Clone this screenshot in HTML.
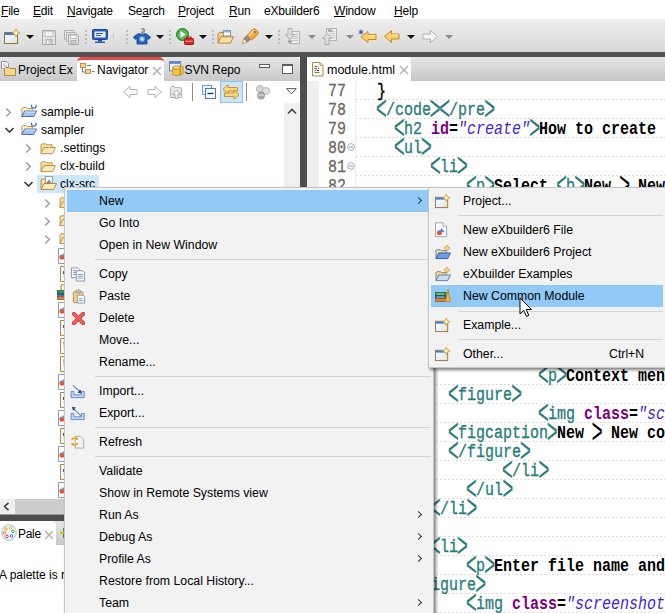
<!DOCTYPE html>
<html>
<head>
<meta charset="utf-8">
<title>eXbuilder6</title>
<style>
*{box-sizing:border-box;margin:0;padding:0}
html,body{width:665px;height:613px;overflow:hidden;background:#fff}
body{position:relative;font-family:"Liberation Sans","NanumGothic",sans-serif;font-size:12px;color:#000}
.abs{position:absolute}
#menubar{left:0;top:0;width:665px;height:19px;background:#fff}
#menubar span{position:absolute;top:4px;font-size:12px;line-height:14px;white-space:nowrap;letter-spacing:-0.200px}
#menubar u{text-decoration:underline;text-underline-offset:1px}
#toolbar{left:0;top:19px;width:665px;height:33px;background:linear-gradient(#eeeeee,#d9d9d9)}
#band{left:0;top:52px;width:665px;height:5px;background:#515151}
#gap{left:300px;top:57px;width:7px;height:556px;background:#4d4d4d}
/* left panel */
#lhead{left:0;top:57px;width:300px;height:24px;background:linear-gradient(#e6e6e6,#c9c9c9);border-top-right-radius:5px}
#ltool{left:0;top:81px;width:300px;height:22px;background:#fff}
#ltree{left:0;top:103px;width:300px;height:396px;background:#fff;overflow:hidden}
.tab{position:absolute;white-space:nowrap;font-size:12px;line-height:14px}
.trow{position:absolute;left:0;height:18px;font-size:12.200px;line-height:18px;white-space:nowrap}
.dd{position:absolute;width:0;height:0;border-left:4px solid transparent;border-right:4px solid transparent;border-top:4px solid #111}
.dd.g{border-top-color:#8a8a8a}
.sep{position:absolute;width:2px;height:14px;top:11px;background:repeating-linear-gradient(#bdbdbd 0 2px,transparent 2px 4px)}
/* editor */
#ehead{left:307px;top:57px;width:358px;height:24px;background:linear-gradient(#e6e6e6,#c6c6c6);border-top-left-radius:5px}
#etab{left:307px;top:57px;width:104px;height:24px;background:#fff;border-top-left-radius:5px;border-top-right-radius:4px}
#ebody{left:307px;top:81px;width:358px;height:532px;background:#fff;overflow:hidden}
#eruler{left:0;top:0;width:12px;height:532px;background:#efefef}
.ln{position:absolute;left:0;width:358px;height:19px;background:repeating-linear-gradient(90deg,#dedede 0 2px,transparent 2px 4px) 49px 18px/309px 1px no-repeat}
.ln .n{position:absolute;left:20.5px;top:1px;font-family:"Liberation Mono",monospace;font-size:19px;line-height:19px;color:#6f675c;-webkit-text-stroke:0.300px #6f675c;transform:scaleX(0.7895);transform-origin:0 50%}
.ln .c{position:absolute;top:1px;font-family:"Liberation Mono","NanumGothic",monospace;font-size:19px;line-height:19px;white-space:pre;color:#000;font-weight:bold;transform:scaleX(0.7895);transform-origin:0 50%}
.t{color:#2a7c7c;font-weight:normal;-webkit-text-stroke:0.350px #2a7c7c}
.k{display:inline-block;font-style:normal;-webkit-text-stroke:0;transform:scale(1.250,1.800);transform-origin:50% 39%}
.a{color:#7f007f}
.v{color:#3a1fe0;font-style:italic;font-weight:normal}
/* menus */
.menu{position:absolute;background:#f2f2f2;border:1px solid #c6c6c6;box-shadow:2px 2px 3px rgba(0,0,0,.5)}
.mi{position:absolute;left:2px;height:22px;font-size:12.3px;line-height:22px;white-space:nowrap}
.mi.hl{background:#91c9f7}
.mi span{position:absolute;top:0}
.ms{position:absolute;height:1px;background:#d4d4d4}
.arr{position:absolute;width:5px;height:5px;border-right:1.3px solid #333;border-top:1.3px solid #333;transform:rotate(45deg)}
</style>
</head>
<body>
<div id="menubar" class="abs">
<span style="left:1px"><u>F</u>ile</span>
<span style="left:33px"><u>E</u>dit</span>
<span style="left:67px"><u>N</u>avigate</span>
<span style="left:128px">Se<u>a</u>rch</span>
<span style="left:178px"><u>P</u>roject</span>
<span style="left:229px"><u>R</u>un</span>
<span style="left:264px">eXbuilder6</span>
<span style="left:334px"><u>W</u>indow</span>
<span style="left:394px"><u>H</u>elp</span>
</div>
<div id="toolbar" class="abs">
<!-- new wizard -->
<svg class="abs" style="left:4px;top:10px" width="17" height="16" viewBox="0 0 17 16">
<defs><linearGradient id="gw" x1="0" y1="0" x2="1" y2="1"><stop offset="0" stop-color="#ffffff"/><stop offset="0.6" stop-color="#e8f0fa"/><stop offset="1" stop-color="#f6dc9a"/></linearGradient></defs>
<rect x="0.5" y="3.5" width="13" height="11" fill="url(#gw)" stroke="#8d7750"/>
<rect x="1" y="4" width="12" height="2" fill="#3f7fdc"/>
<path d="M13 0l1.300 2.700 2.700 1.300-2.700 1.300-1.300 2.700-1.300-2.700-2.700-1.300 2.700-1.300z" fill="#fff6cc" stroke="#d69a2c" stroke-width="0.900" transform="translate(-1,0)"/>
</svg>
<div class="dd" style="left:26px;top:16px"></div>
<!-- save (disabled) -->
<svg class="abs" style="left:41px;top:10px" width="16" height="17" viewBox="0 0 16 16" preserveAspectRatio="none">
<path d="M1.500 1.500h12l1 1v12h-13z" fill="#e4e4e4" stroke="#a9a9a9"/>
<rect x="4" y="2" width="8" height="5" fill="#f4f4f4" stroke="#b5b5b5" stroke-width="0.8"/>
<rect x="5" y="10" width="6" height="4.500" fill="#d0d0d0" stroke="#a9a9a9" stroke-width="0.8"/>
<rect x="6" y="11" width="1.500" height="3" fill="#f4f4f4"/>
</svg>
<!-- save all (disabled) -->
<svg class="abs" style="left:63px;top:10px" width="17" height="17" viewBox="0 0 17 17">
<path d="M1.500 1.500h9l1 1v8h-10z" fill="#e6e6e6" stroke="#b0b0b0"/>
<path d="M3.500 3.500h9l1 1v8h-10z" fill="#e6e6e6" stroke="#b0b0b0"/>
<path d="M5.500 5.500h9l1 1v9h-10z" fill="#e4e4e4" stroke="#a9a9a9"/>
<rect x="7.500" y="6" width="6" height="3.500" fill="#f4f4f4" stroke="#b5b5b5" stroke-width="0.8"/>
<rect x="8" y="11.500" width="5" height="3.500" fill="#d0d0d0" stroke="#a9a9a9" stroke-width="0.8"/>
</svg>
<div class="sep" style="left:85px"></div>
<!-- monitor -->
<svg class="abs" style="left:92px;top:10px" width="17" height="15" viewBox="0 0 17 15">
<rect x="0.500" y="0.500" width="15" height="10" rx="1" fill="#2a5fb8" stroke="#1c479a"/>
<rect x="2.500" y="2.500" width="11" height="6" fill="#e9f1fc"/>
<rect x="4" y="4" width="7" height="1" fill="#2a5fb8"/><rect x="4" y="6" width="5" height="1" fill="#2a5fb8"/>
<rect x="6" y="11" width="4" height="1.500" fill="#1c479a"/><rect x="3" y="12.500" width="10" height="1.500" fill="#2a5fb8"/>
</svg>
<div class="abs" style="left:113px;top:15px;width:1px;height:4px;background:#c4c4c4"></div>
<div class="sep" style="left:126px"></div>
<!-- tshirt -->
<svg class="abs" style="left:133px;top:9px" width="18" height="17" viewBox="0 0 18 17">
<path d="M8.600 1a1.800 1.800 0 1 1 0.400 3.300v1.400" fill="none" stroke="#8a8a8a" stroke-width="1.700"/>
<path d="M5.500 5.500l-5 3.500 1.800 2.300 1.700-1v5.700h10v-5.700l1.700 1 1.800-2.300-5-3.500q-3.500 2-7 0z" fill="#2262b8" stroke="#17468c" stroke-width="0.900"/>
<circle cx="9" cy="11" r="2.700" fill="#8cb8e8"/><circle cx="9" cy="11" r="1.300" fill="#d8e9fa"/>
</svg>
<div class="dd" style="left:156px;top:16px"></div>
<div class="sep" style="left:169px"></div>
<!-- run with toolbox -->
<svg class="abs" style="left:176px;top:9px" width="18" height="17" viewBox="0 0 18 17">
<circle cx="6.500" cy="6.500" r="6" fill="#3faa3f" stroke="#2a7c2a"/>
<circle cx="6.500" cy="6.500" r="4.800" fill="#62c562" opacity="0.700"/>
<path d="M4.500 3.200v6.600l5.500-3.300z" fill="#fff"/>
<rect x="8.500" y="10.500" width="9" height="6" rx="0.800" fill="#dc2a2a" stroke="#a61414"/>
<path d="M11 10.500v-1.500h4v1.500" fill="none" stroke="#a61414" stroke-width="1.100"/>
<rect x="9" y="12.800" width="8" height="0.900" fill="#f6a0a0"/>
</svg>
<div class="dd" style="left:199px;top:16px"></div>
<div class="sep" style="left:212px"></div>
<!-- open folder -->
<svg class="abs" style="left:217px;top:11px" width="17.500" height="14.500" viewBox="0 0 18 15">
<path d="M1 13.500v-9.500l1.500-1.500h4l1.500 1.500h6v3" fill="#f3d28a" stroke="#b98532"/>
<rect x="6.500" y="0.700" width="7.500" height="5.500" fill="#fff" stroke="#6f7f9c" stroke-width="0.900"/>
<rect x="7" y="1.200" width="6.500" height="1.300" fill="#7aa0d8"/>
<path d="M1 13.500l3-6.500h13l-3 6.500z" fill="#f8e0a4" stroke="#b98532"/>
</svg>
<!-- pen / torch -->
<svg class="abs" style="left:241px;top:9px" width="19" height="17" viewBox="0 0 19 17">
<path d="M1 15.500l2-5 3.500 3.500z" fill="#fff2c4" stroke="#c4932f" stroke-width="0.800"/>
<path d="M3 10.500l3-3 3.500 3.500-3 3z" fill="#8f8f8f" stroke="#6d6d6d" stroke-width="0.800"/>
<path d="M6 7.500l5.500-6 2.500-0.800 3.500 3.500-1 2.500-6 5.500z" fill="#f5a942" stroke="#c47a1a" stroke-width="0.900"/>
<path d="M8 7.500l5-5" stroke="#fde0a8" stroke-width="1.500"/>
<circle cx="13.800" cy="4" r="0.900" fill="#3a5ea8"/>
</svg>
<div class="dd" style="left:265px;top:16px"></div>
<div class="sep" style="left:278px"></div>
<!-- next annotation (disabled) -->
<svg class="abs" style="left:285px;top:9px" width="16" height="17" viewBox="0 0 16 17">
<rect x="4.500" y="3.500" width="10" height="12" fill="#ececec" stroke="#b4b4b4"/>
<path d="M7 6.500h6M7 8.500h6M7 10.500h6M7 12.500h6" stroke="#c6c6c6"/>
<path d="M3 0.500h4v6h2.500l-4.500 5-4.500-5h2.500z" fill="#dedede" stroke="#a8a8a8" stroke-width="0.900"/>
<rect x="3" y="12.500" width="4" height="2" fill="#9a9a9a"/>
</svg>
<div class="dd g" style="left:308px;top:16px"></div>
<!-- prev annotation (disabled) -->
<svg class="abs" style="left:322px;top:9px" width="16" height="17" viewBox="0 0 16 17">
<rect x="4.500" y="0.500" width="10" height="12" fill="#ececec" stroke="#b4b4b4"/>
<path d="M7 3.500h6M7 5.500h6M7 7.500h6M7 9.500h6" stroke="#c6c6c6"/>
<path d="M3 16.500h4v-6h2.500l-4.500-5-4.500 5h2.500z" fill="#dedede" stroke="#a8a8a8" stroke-width="0.900"/>
<rect x="6" y="1.500" width="4" height="2" fill="#9a9a9a"/>
</svg>
<div class="dd g" style="left:346px;top:16px"></div>
<!-- last edit location -->
<svg class="abs" style="left:358px;top:10px" width="19" height="15" viewBox="0 0 19 15">
<path d="M10 2.500v3h8v5h-8v3l-7-5.500z" fill="#fcd26a" stroke="#c98a1e" stroke-linejoin="round"/>
<path d="M10 6.500h7" stroke="#fff0c0" stroke-width="1"/>
<path d="M3 0.500v5M0.800 1.700l4.400 2.600M5.200 1.700l-4.400 2.600" stroke="#2a4f9e" stroke-width="1"/>
</svg>
<!-- back -->
<svg class="abs" style="left:384px;top:10px" width="16" height="15" viewBox="0 0 16 15">
<path d="M7.500 1.500v3.500h7.500v5h-7.500v3.500l-7-6z" fill="#fcd26a" stroke="#c98a1e" stroke-linejoin="round"/>
<path d="M7.500 6h7" stroke="#fff0c0" stroke-width="1"/>
</svg>
<div class="dd" style="left:407px;top:16px"></div>
<!-- forward disabled -->
<svg class="abs" style="left:422px;top:10px" width="16" height="15" viewBox="0 0 16 15">
<path d="M8.500 1.500v3.500h-7.500v5h7.500v3.500l7-6z" fill="#f6f6f6" stroke="#b2b2b2" stroke-linejoin="round"/>
</svg>
<div class="dd g" style="left:445px;top:16px"></div>
</div>
<div id="band" class="abs"></div>
<div id="lhead" class="abs">
<!-- Project Ex tab -->
<svg class="abs" style="left:1px;top:4px" width="16" height="16" viewBox="0 0 16 16">
<path d="M0.500 0.500h5l2 2v5h-7z" fill="#fff" stroke="#8a8a9a" stroke-width="0.900"/>
<path d="M2 3h3M2 5h4" stroke="#9aa6c4" stroke-width="0.800"/>
<path d="M3.500 14.500v-7l1-1h3l1 1h6v7z" fill="#f6d88c" stroke="#b98532"/>
</svg>
<span class="tab" style="left:18px;top:6px">Project Ex</span>
<!-- active Navigator tab -->
<div class="abs" style="left:77px;top:0;width:87px;height:24px;background:#fff;border-top:3px solid #e14a4a;border-radius:5px 5px 0 0"></div>
<svg class="abs" style="left:80px;top:6px" width="15" height="12" viewBox="0 0 15 12">
<rect x="0.500" y="0.500" width="5" height="4" fill="#f6d88c" stroke="#b98532" stroke-width="0.900"/>
<rect x="5.500" y="6.500" width="5" height="4" fill="#f6d88c" stroke="#b98532" stroke-width="0.900"/>
<path d="M2.500 5v4h3" fill="none" stroke="#4a78b8" stroke-width="1"/>
<path d="M7 2.500h4M12 8.500h2.500" stroke="#4a78b8" stroke-width="1.200"/>
</svg>
<span class="tab" style="left:97px;top:6px">Navigator</span>
<svg class="abs" style="left:152px;top:8.500px" width="10" height="10" viewBox="0 0 10 10"><path d="M1 1l8 8M9 1l-8 8" stroke="#b4b4b4" stroke-width="1.600"/></svg>
<!-- SVN Repo tab -->
<svg class="abs" style="left:169px;top:4px" width="15" height="16" viewBox="0 0 16 17">
<rect x="0.500" y="0.500" width="12" height="10" fill="#f2f6fc" stroke="#5a78a8" stroke-width="0.900"/>
<rect x="1" y="1" width="11" height="2" fill="#5a8ad0"/>
<path d="M4 7v7.500q4 2.500 8 0v-7.500z" fill="#f6c648" stroke="#b07c14" stroke-width="0.900"/>
<ellipse cx="8" cy="7" rx="4" ry="1.800" fill="#fde28a" stroke="#b07c14" stroke-width="0.900"/>
<path d="M12 8v7q3-0.500 3-2v-6.500q-1-1.500-3-1z" fill="#f6c648" stroke="#b07c14" stroke-width="0.800"/>
</svg>
<span class="tab" style="left:184.500px;top:6px;letter-spacing:-0.100px">SVN Repo</span>
<!-- min / max -->
<div class="abs" style="left:259px;top:7px;width:11px;height:4px;border:1px solid #5c5c5c;background:#fff"></div>
<div class="abs" style="left:282px;top:7px;width:11px;height:10px;border:1px solid #5c5c5c;border-top-width:2px;background:#fff"></div>
</div>
<div id="ltool" class="abs">
<svg class="abs" style="left:123px;top:4px" width="15" height="14" viewBox="0 0 15 14"><path d="M7 1.500v3h7v5h-7v3l-6.500-5.500z" fill="#fbfbfb" stroke="#b6b6b6" stroke-linejoin="round"/></svg>
<svg class="abs" style="left:147px;top:4px" width="15" height="14" viewBox="0 0 15 14"><path d="M8 1.500v3h-7v5h7v3l6.500-5.500z" fill="#fbfbfb" stroke="#b6b6b6" stroke-linejoin="round"/></svg>
<svg class="abs" style="left:169px;top:3px" width="15" height="16" viewBox="0 0 15 16">
<path d="M1.500 13.500v-10l1-1h3l1 1h5l1 1v9z" fill="#e6e6e6" stroke="#b4b4b4"/>
<path d="M6 14.500v-4h-2.500l4-4.500 4 4.500h-2.500v4z" fill="#f4f4f4" stroke="#a4a4a4" stroke-width="0.900"/>
</svg>
<div class="abs" style="left:192px;top:2px;width:1px;height:18px;background:#8c8c8c"></div>
<svg class="abs" style="left:202px;top:4px" width="14" height="14" viewBox="0 0 14 14">
<rect x="0.500" y="0.500" width="9" height="9" fill="#eef4fc" stroke="#7a9cc8"/>
<rect x="3.500" y="3.500" width="10" height="10" fill="#fff" stroke="#4a78b8"/>
<path d="M5.500 8.500h6" stroke="#1c3c78" stroke-width="1.400"/>
</svg>
<div class="abs" style="left:220px;top:0;width:23px;height:22px;background:#cce4f7;border:1px solid #8cc2ee"></div>
<svg class="abs" style="left:222px;top:3px" width="18" height="16" viewBox="0 0 18 16">
<path d="M6 0.800v2.700h9.500v3.500h-9.500v2.700l-5-4.450z" fill="#fcd878" stroke="#c98a1e" stroke-width="0.900" stroke-linejoin="round"/>
<path d="M12 6.300v2.700h-9.500v3.500h9.500v2.700l5-4.450z" fill="#fcd878" stroke="#c98a1e" stroke-width="0.900" stroke-linejoin="round"/>
</svg>
<div class="abs" style="left:246px;top:2px;width:1px;height:18px;background:#8c8c8c"></div>
<svg class="abs" style="left:255px;top:4px" width="16" height="15" viewBox="0 0 16 15">
<circle cx="5" cy="4" r="3.500" fill="#d6d6d6" stroke="#b6b6b6"/>
<circle cx="11" cy="6" r="3.500" fill="#dedede" stroke="#bcbcbc"/>
<circle cx="6" cy="10.500" r="3.500" fill="#a8a8a8" stroke="#9a9a9a"/>
<path d="M3 10h6" stroke="#e8e8e8"/>
</svg>
<svg class="abs" style="left:286px;top:7px" width="11" height="7" viewBox="0 0 11 7"><path d="M0.700 0.600h9.600l-4.800 5.400z" fill="#fff" stroke="#5c5c5c" stroke-width="1"/></svg>
</div>
<div id="ltree" class="abs"><svg class="abs" style="left:5px;top:4px" width="7" height="11" viewBox="0 0 7 11"><path d="M1.200 1.500l4 4-4 4" fill="none" stroke="#a2a2a2" stroke-width="1.700"/></svg><svg class="abs" style="left:21px;top:1px" width="17" height="15" viewBox="0 0 17 15">
<path d="M0.800 12.500v-8l1-1h3.500l1 1h5v2" fill="#fbf0c8" stroke="#b89048" stroke-width="0.900"/>
<path d="M0.800 12.500l2.800-5.500h12l-2.800 5.500z" fill="#a4c4f0" stroke="#3c64b0" stroke-width="0.900"/>
<path d="M3.800 8h10.500" stroke="#d8e8fc" stroke-width="1"/>
<path d="M10.500 0.800q-0.300 3.400 2.300 3.400t2.300-3.400" fill="none" stroke="#3c64b0" stroke-width="1.200"/>
</svg><span class="trow" style="left:41px;top:0px">sample-ui</span>
<svg class="abs" style="left:4px;top:24px" width="11" height="7" viewBox="0 0 11 7"><path d="M1.500 1l4 4 4-4" fill="none" stroke="#3c3c3c" stroke-width="1.700"/></svg><svg class="abs" style="left:21px;top:19px" width="17" height="15" viewBox="0 0 17 15">
<path d="M0.800 12.500v-8l1-1h3.500l1 1h5v2" fill="#fbf0c8" stroke="#b89048" stroke-width="0.900"/>
<path d="M0.800 12.500l2.800-5.500h12l-2.800 5.500z" fill="#a4c4f0" stroke="#3c64b0" stroke-width="0.900"/>
<path d="M3.800 8h10.500" stroke="#d8e8fc" stroke-width="1"/>
<path d="M10.500 0.800q-0.300 3.400 2.300 3.400t2.300-3.400" fill="none" stroke="#3c64b0" stroke-width="1.200"/>
</svg><span class="trow" style="left:41px;top:18px">sampler</span>
<svg class="abs" style="left:25px;top:40px" width="7" height="11" viewBox="0 0 7 11"><path d="M1.200 1.500l4 4-4 4" fill="none" stroke="#a2a2a2" stroke-width="1.700"/></svg><svg class="abs" style="left:40px;top:39px" width="16" height="13" viewBox="0 0 17 14">
<path d="M1 12.500v-9.500l1-1h4l1 1h6v3" fill="#f8e2a8" stroke="#c08a34"/>
<path d="M1 12.500l3-6.500h12.500l-3 6.500z" fill="#fbeabc" stroke="#c08a34"/>
</svg><span class="trow" style="left:60px;top:36px">.settings</span>
<svg class="abs" style="left:25px;top:58px" width="7" height="11" viewBox="0 0 7 11"><path d="M1.200 1.500l4 4-4 4" fill="none" stroke="#a2a2a2" stroke-width="1.700"/></svg><svg class="abs" style="left:40px;top:57px" width="16" height="13" viewBox="0 0 17 14">
<path d="M1 12.500v-9.500l1-1h4l1 1h6v3" fill="#f8e2a8" stroke="#c08a34"/>
<path d="M1 12.500l3-6.500h12.500l-3 6.500z" fill="#fbeabc" stroke="#c08a34"/>
</svg><span class="trow" style="left:60px;top:54px">clx-build</span>
<div class="abs" style="left:37px;top:72px;width:62px;height:18px;background:#cce8ff"></div><svg class="abs" style="left:23px;top:78px" width="11" height="7" viewBox="0 0 11 7"><path d="M1.500 1l4 4 4-4" fill="none" stroke="#3c3c3c" stroke-width="1.700"/></svg><svg class="abs" style="left:40px;top:73px" width="17" height="15" viewBox="0 0 17 15">
<path d="M1 13.500v-9.500l1-1h3l1 1h6v3" fill="#f8e2a8" stroke="#c08a34"/>
<rect x="5.500" y="0.500" width="7" height="8" fill="#fff" stroke="#8a8a9a" stroke-width="0.800"/>
<path d="M6.500 7l2.500-3.500 2.500 3.500z" fill="#5a9ae0"/><circle cx="8" cy="7" r="1.300" fill="#e04848"/>
<path d="M1 13.500l3-6h12.500l-3 6z" fill="#fbeabc" stroke="#c08a34"/>
</svg><span class="trow" style="left:60px;top:72px">clx-src</span>
<svg class="abs" style="left:44px;top:95px" width="7" height="11" viewBox="0 0 7 11"><path d="M1.200 1.500l4 4-4 4" fill="none" stroke="#a2a2a2" stroke-width="1.700"/></svg><svg class="abs" style="left:59px;top:93px" width="16" height="13" viewBox="0 0 17 14">
<path d="M1 12.500v-9.500l1-1h4l1 1h6v3" fill="#f8e2a8" stroke="#c08a34"/>
<path d="M1 12.500l3-6.500h12.500l-3 6.500z" fill="#fbeabc" stroke="#c08a34"/>
</svg>
<svg class="abs" style="left:44px;top:113px" width="7" height="11" viewBox="0 0 7 11"><path d="M1.200 1.500l4 4-4 4" fill="none" stroke="#a2a2a2" stroke-width="1.700"/></svg><svg class="abs" style="left:59px;top:111px" width="16" height="13" viewBox="0 0 17 14">
<path d="M1 12.500v-9.500l1-1h4l1 1h6v3" fill="#f8e2a8" stroke="#c08a34"/>
<path d="M1 12.500l3-6.500h12.500l-3 6.500z" fill="#fbeabc" stroke="#c08a34"/>
</svg>
<svg class="abs" style="left:44px;top:131px" width="7" height="11" viewBox="0 0 7 11"><path d="M1.200 1.500l4 4-4 4" fill="none" stroke="#a2a2a2" stroke-width="1.700"/></svg><svg class="abs" style="left:59px;top:129px" width="16" height="13" viewBox="0 0 17 14">
<path d="M1 12.500v-9.500l1-1h4l1 1h6v3" fill="#f8e2a8" stroke="#c08a34"/>
<path d="M1 12.500l3-6.500h12.500l-3 6.500z" fill="#fbeabc" stroke="#c08a34"/>
</svg>
<svg class="abs" style="left:58px;top:145px" width="13" height="16" viewBox="0 0 13 16"><path d="M0.500 0.500h8l3.500 3.500v11.500h-11.500z" fill="#fff" stroke="#9a9aa6" stroke-width="1"/><circle cx="4" cy="9" r="2.600" fill="#e8542e"/><path d="M3 8.500l3-3.500 3 3.500z" fill="#5a9ae0"/></svg>
<svg class="abs" style="left:60px;top:163px" width="13" height="16" viewBox="0 0 13 16"><path d="M0.500 0.500h8l3.500 3.500v11.500h-11.500z" fill="#fff" stroke="#b08a3c" stroke-width="1"/><rect x="3" y="5" width="5" height="3" fill="#2a5cb4"/><rect x="3" y="9.500" width="6" height="1" fill="#b8c4d8"/></svg>
<svg class="abs" style="left:57px;top:181px" width="16" height="16" viewBox="0 0 16 16">
<rect x="4" y="1" width="8" height="8" fill="#fff" stroke="#b08a3c"/>
<rect x="0.500" y="6.500" width="11" height="3" fill="#3a9a4a" stroke="#1f6a2c" stroke-width="0.800"/>
<rect x="0.500" y="9.500" width="11" height="3" fill="#3a6ab8" stroke="#244a8a" stroke-width="0.800"/>
<rect x="0.500" y="12.500" width="11" height="3" fill="#d08a3c" stroke="#9a5a18" stroke-width="0.800"/>
</svg>
<svg class="abs" style="left:58px;top:199px" width="13" height="16" viewBox="0 0 13 16"><path d="M0.500 0.500h8l3.500 3.500v11.500h-11.500z" fill="#fff" stroke="#9a9aa6" stroke-width="1"/><circle cx="4" cy="9" r="2.600" fill="#e8542e"/><path d="M3 8.500l3-3.500 3 3.500z" fill="#5a9ae0"/></svg>
<svg class="abs" style="left:60px;top:217px" width="13" height="16" viewBox="0 0 13 16"><path d="M0.500 0.500h8l3.500 3.500v11.500h-11.500z" fill="#fff" stroke="#b08a3c" stroke-width="1"/><rect x="3" y="5" width="5" height="3" fill="#2a5cb4"/><rect x="3" y="9.500" width="6" height="1" fill="#b8c4d8"/></svg>
<svg class="abs" style="left:60px;top:235px" width="13" height="16" viewBox="0 0 13 16"><path d="M0.500 0.500h8l3.500 3.500v11.500h-11.500z" fill="#fff" stroke="#b08a3c" stroke-width="1"/><path d="M3 4h6M3 6h6M3 8h6M3 10h6" stroke="#c8b48c" stroke-width="0.800"/><path d="M3 5h2" stroke="#d84a4a" stroke-width="0.800"/></svg>
<svg class="abs" style="left:60px;top:253px" width="13" height="16" viewBox="0 0 13 16"><path d="M0.500 0.500h8l3.500 3.500v11.500h-11.500z" fill="#fff" stroke="#b08a3c" stroke-width="1"/><path d="M3 4h6M3 6h6M3 8h6M3 10h6" stroke="#c8b48c" stroke-width="0.800"/><path d="M3 5h2" stroke="#d84a4a" stroke-width="0.800"/></svg>
<svg class="abs" style="left:58px;top:271px" width="13" height="16" viewBox="0 0 13 16"><path d="M0.500 0.500h8l3.500 3.500v11.500h-11.500z" fill="#fff" stroke="#9a9aa6" stroke-width="1"/><circle cx="4" cy="9" r="2.600" fill="#e8542e"/><path d="M3 8.500l3-3.500 3 3.500z" fill="#5a9ae0"/></svg>
<svg class="abs" style="left:60px;top:289px" width="13" height="16" viewBox="0 0 13 16"><path d="M0.500 0.500h8l3.500 3.500v11.500h-11.500z" fill="#fff" stroke="#b08a3c" stroke-width="1"/><rect x="3" y="5" width="5" height="3" fill="#2a5cb4"/><rect x="3" y="9.500" width="6" height="1" fill="#b8c4d8"/></svg>
<svg class="abs" style="left:58px;top:307px" width="13" height="16" viewBox="0 0 13 16"><path d="M0.500 0.500h8l3.500 3.500v11.500h-11.500z" fill="#fff" stroke="#9a9aa6" stroke-width="1"/><circle cx="4" cy="9" r="2.600" fill="#e8542e"/><path d="M3 8.500l3-3.500 3 3.500z" fill="#5a9ae0"/></svg>
<svg class="abs" style="left:60px;top:325px" width="13" height="16" viewBox="0 0 13 16"><path d="M0.500 0.500h8l3.500 3.500v11.500h-11.500z" fill="#fff" stroke="#b08a3c" stroke-width="1"/><rect x="3" y="5" width="5" height="3" fill="#2a5cb4"/><rect x="3" y="9.500" width="6" height="1" fill="#b8c4d8"/></svg>
<svg class="abs" style="left:58px;top:343px" width="13" height="16" viewBox="0 0 13 16"><path d="M0.500 0.500h8l3.500 3.500v11.500h-11.500z" fill="#fff" stroke="#9a9aa6" stroke-width="1"/><circle cx="4" cy="9" r="2.600" fill="#e8542e"/><path d="M3 8.500l3-3.500 3 3.500z" fill="#5a9ae0"/></svg>
<svg class="abs" style="left:60px;top:361px" width="13" height="16" viewBox="0 0 13 16"><path d="M0.500 0.500h8l3.500 3.500v11.500h-11.500z" fill="#fff" stroke="#b08a3c" stroke-width="1"/><rect x="3" y="5" width="5" height="3" fill="#2a5cb4"/><rect x="3" y="9.500" width="6" height="1" fill="#b8c4d8"/></svg>
<svg class="abs" style="left:58px;top:379px" width="13" height="16" viewBox="0 0 13 16"><path d="M0.500 0.500h8l3.500 3.500v11.500h-11.500z" fill="#fff" stroke="#9a9aa6" stroke-width="1"/><circle cx="4" cy="9" r="2.600" fill="#e8542e"/><path d="M3 8.500l3-3.500 3 3.500z" fill="#5a9ae0"/></svg>
<div class="abs" style="left:284px;top:0;width:16px;height:396px;background:#f0f0f0"></div>
<svg class="abs" style="left:287px;top:5px" width="10" height="7" viewBox="0 0 10 7"><path d="M1 5.500l4-4 4 4" fill="none" stroke="#404040" stroke-width="1.600"/></svg>
</div>
<!-- h scrollbar -->
<div class="abs" style="left:0;top:499px;width:300px;height:15px;background:#cdcdcd"></div>
<div class="abs" style="left:0;top:499px;width:15px;height:15px;background:#f0f0f0"></div>
<svg class="abs" style="left:3px;top:502px" width="7" height="9" viewBox="0 0 7 9"><path d="M5.500 0.800l-4 3.700 4 3.700" fill="none" stroke="#404040" stroke-width="1.600"/></svg>
<div class="abs" style="left:0;top:514px;width:300px;height:7px;background:#4d4d4d;border-top:1px solid #9a9a9a"></div>
<!-- bottom panel -->
<div class="abs" style="left:0;top:521px;width:300px;height:24px;background:linear-gradient(#e6e6e6,#c9c9c9)"></div>
<div class="abs" style="left:0;top:521px;width:56px;height:24px;background:#fff;border-top-right-radius:5px"></div>
<svg class="abs" style="left:1px;top:524px" width="16" height="17" viewBox="0 0 16 17">
<ellipse cx="8" cy="8.500" rx="7.300" ry="7.800" fill="#f4f6fa" stroke="#aab4c8" stroke-width="0.900"/>
<circle cx="5" cy="5" r="1.300" fill="none" stroke="#e8a020" stroke-width="0.900"/><circle cx="9.500" cy="4" r="1.300" fill="none" stroke="#e0c020" stroke-width="0.900"/>
<circle cx="12" cy="7.500" r="1.300" fill="none" stroke="#3aa040" stroke-width="0.900"/><circle cx="10.500" cy="12" r="1.300" fill="none" stroke="#3060c8" stroke-width="0.900"/>
<circle cx="6" cy="12.500" r="1.300" fill="none" stroke="#d83030" stroke-width="0.900"/><circle cx="3.500" cy="9" r="1.300" fill="none" stroke="#e06a20" stroke-width="0.900"/>
</svg>
<span class="tab" style="left:18px;top:527px;letter-spacing:-0.300px">Pale</span>
<svg class="abs" style="left:43.500px;top:530px" width="10" height="10" viewBox="0 0 10 10"><path d="M1 1l8 8M9 1l-8 8" stroke="#b4b4b4" stroke-width="1.600"/></svg>
<svg class="abs" style="left:59px;top:526px" width="8" height="14" viewBox="0 0 8 14"><path d="M5 2v10" stroke="#3a9a4a" stroke-width="2"/><path d="M1 7h6" stroke="#e0b020" stroke-width="2"/></svg>
<div class="abs" style="left:0;top:545px;width:300px;height:68px;background:#fff"></div>
<span class="tab" style="left:-1px;top:568px">A palette is required</span>

<div id="gap" class="abs"></div>
<div id="ehead" class="abs"></div>
<div id="etab" class="abs"></div>
<svg class="abs" style="left:312px;top:62px" width="12" height="15" viewBox="0 0 12 15">
<path d="M0.500 0.500h7.500l3 3v10.500h-10.500z" fill="#fffdf4" stroke="#a8884c"/>
<path d="M8 0.500v3h3" fill="#f4e4b8" stroke="#a8884c" stroke-width="0.800"/>
<path d="M2.500 4.500h3" stroke="#e04040" stroke-width="1.100"/><path d="M2.500 6.500h2.500" stroke="#3a6ac8" stroke-width="1.100"/><path d="M6 6.500h1" stroke="#3a6ac8" stroke-width="1.100"/>
<path d="M2.500 8.500h2" stroke="#e04040" stroke-width="1.100"/><path d="M5 8.500h2" stroke="#3a3a8a" stroke-width="1.100"/>
<path d="M2.500 10.500h5" stroke="#3aa050" stroke-width="1.100"/>
</svg>
<span class="tab" style="left:327px;top:62.500px;font-size:12.500px">module.html</span>
<svg class="abs" style="left:399px;top:65px" width="10" height="10" viewBox="0 0 10 10"><path d="M1 1l8 8M9 1l-8 8" stroke="#b4b4b4" stroke-width="1.600"/></svg>
<div id="ebody" class="abs"><div id="eruler" class="abs"></div>
<div class="abs" style="left:48px;top:0;width:0;height:532px;border-left:1px dotted #dcdcdc"></div>
<div class="ln" style="top:0px"><span class="n">77</span><span class="c" style="left:69.5px;font-weight:normal;-webkit-text-stroke:0.400px #000">}</span></div>
<div class="ln" style="top:19px"><span class="n">78</span><span class="c" style="left:69.5px"><span class="t"><i class="k">&lt;</i>/code<i class="k">&gt;</i><i class="k">&lt;</i>/pre<i class="k">&gt;</i></span></span></div>
<div class="ln" style="top:38px"><span class="n">79</span><span class="c" style="left:87.5px"><span class="t"><i class="k">&lt;</i>h2</span> <span class="a">id</span>=<span class="v">"create"</span><span class="t"><i class="k">&gt;</i></span>How to create a</span></div>
<div class="ln" style="top:57px"><span class="n">80</span><svg class="abs" style="left:40px;top:5px" width="8" height="8" viewBox="0 0 8 8"><circle cx="4" cy="4" r="3.400" fill="#fff" stroke="#9aa4b4" stroke-width="0.900"/><path d="M2 4h4" stroke="#7a8494" stroke-width="0.900"/></svg><span class="c" style="left:87.5px"><span class="t"><i class="k">&lt;</i>ul<i class="k">&gt;</i></span></span></div>
<div class="ln" style="top:76px"><span class="n">81</span><svg class="abs" style="left:40px;top:5px" width="8" height="8" viewBox="0 0 8 8"><circle cx="4" cy="4" r="3.400" fill="#fff" stroke="#9aa4b4" stroke-width="0.900"/><path d="M2 4h4" stroke="#7a8494" stroke-width="0.900"/></svg><span class="c" style="left:123.5px"><span class="t"><i class="k">&lt;</i>li<i class="k">&gt;</i></span></span></div>
<div class="ln" style="top:95px"><span class="n">82</span><span class="c" style="left:159.5px"><span class="t"><i class="k">&lt;</i>p<i class="k">&gt;</i></span>Select <span class="t"><i class="k">&lt;</i>b<i class="k">&gt;</i></span>New <i class="k" style="font-weight:normal">&gt;</i> New</span></div>
<div class="ln" style="top:114px"><span class="n">83</span><span class="c" style="left:159.5px"><span class="t"><i class="k">&lt;</i>/p<i class="k">&gt;</i></span></span></div>
<div class="ln" style="top:133px"><span class="n">84</span><span class="c" style="left:69.5px"></span></div>
<div class="ln" style="top:152px"><span class="n">85</span><span class="c" style="left:69.5px"></span></div>
<div class="ln" style="top:171px"><span class="n">86</span><span class="c" style="left:69.5px"></span></div>
<div class="ln" style="top:190px"><span class="n">87</span><span class="c" style="left:69.5px"></span></div>
<div class="ln" style="top:209px"><span class="n">88</span><span class="c" style="left:69.5px"></span></div>
<div class="ln" style="top:228px"><span class="n">89</span><span class="c" style="left:69.5px"></span></div>
<div class="ln" style="top:247px"><span class="n">90</span><span class="c" style="left:69.5px"></span></div>
<div class="ln" style="top:266px"><span class="n">91</span><span class="c" style="left:69.5px"></span></div>
<div class="ln" style="top:285px"><span class="n">92</span><span class="c" style="left:231.5px"><span class="t"><i class="k">&lt;</i>p<i class="k">&gt;</i></span>Context menu</span></div>
<div class="ln" style="top:304px"><span class="n">93</span><span class="c" style="left:141.5px"><span class="t"><i class="k">&lt;</i>figure<i class="k">&gt;</i></span></span></div>
<div class="ln" style="top:323px"><span class="n">94</span><span class="c" style="left:231.5px"><span class="t"><i class="k">&lt;</i>img</span> <span class="a">class</span>=<span class="v">"screenshot"</span></span></div>
<div class="ln" style="top:342px"><span class="n">95</span><span class="c" style="left:141.5px"><span class="t"><i class="k">&lt;</i>figcaption<i class="k">&gt;</i></span>New <i class="k" style="font-weight:normal">&gt;</i> New common</span></div>
<div class="ln" style="top:361px"><span class="n">96</span><span class="c" style="left:141.5px"><span class="t"><i class="k">&lt;</i>/figure<i class="k">&gt;</i></span></span></div>
<div class="ln" style="top:380px"><span class="n">97</span><span class="c" style="left:195.5px"><span class="t"><i class="k">&lt;</i>/li<i class="k">&gt;</i></span></span></div>
<div class="ln" style="top:399px"><span class="n">98</span><span class="c" style="left:159.5px"><span class="t"><i class="k">&lt;</i>/ul<i class="k">&gt;</i></span></span></div>
<div class="ln" style="top:418px"><span class="n">99</span><span class="c" style="left:123.5px"><span class="t"><i class="k">&lt;</i>/li<i class="k">&gt;</i></span></span></div>
<div class="ln" style="top:437px"><span class="n">100</span><span class="c" style="left:69.5px"></span></div>
<div class="ln" style="top:456px"><span class="n">101</span><svg class="abs" style="left:40px;top:5px" width="8" height="8" viewBox="0 0 8 8"><circle cx="4" cy="4" r="3.400" fill="#fff" stroke="#9aa4b4" stroke-width="0.900"/><path d="M2 4h4" stroke="#7a8494" stroke-width="0.900"/></svg><span class="c" style="left:123.5px"><span class="t"><i class="k">&lt;</i>li<i class="k">&gt;</i></span></span></div>
<div class="ln" style="top:475px"><span class="n">102</span><span class="c" style="left:159.5px"><span class="t"><i class="k">&lt;</i>p<i class="k">&gt;</i></span>Enter file name and</span></div>
<div class="ln" style="top:494px"><span class="n">103</span><span class="c" style="left:105.5px"><span class="t"><i class="k">&lt;</i>figure<i class="k">&gt;</i></span></span></div>
<div class="ln" style="top:513px"><span class="n">104</span><span class="c" style="left:159.5px"><span class="t"><i class="k">&lt;</i>img</span> <span class="a">class</span>=<span class="v">"screenshot"</span></span></div>
</div>
<div class="menu" style="left:64px;top:187px;width:370px;height:440px">
<div class="mi hl" style="top:2px;width:364px"><span style="left:32px">New</span><i class="arr" style="left:348.500px;top:8px"></i></div>
<div class="mi" style="top:24px;width:364px"><span style="left:32px">Go Into</span></div>
<div class="mi" style="top:46px;width:364px"><span style="left:32px">Open in New Window</span></div>
<div class="ms" style="left:30px;top:71px;width:336px"></div>
<div class="mi" style="top:75px;width:364px"><svg class="abs" style="left:4px;top:3px" width="15" height="16" viewBox="0 0 16 16">
<path d="M0.500 1.500h7l2 2v8.500h-9z" fill="#fff" stroke="#7a86a0" stroke-width="0.900"/><path d="M2 4.500h5M2 6.500h5M2 8.500h5" stroke="#5a78b0" stroke-width="0.800"/>
<path d="M5.500 4.500h7l2 2v9h-9z" fill="#fff" stroke="#7a86a0" stroke-width="0.900"/><path d="M7 8.500h6M7 10.500h6M7 12.500h6" stroke="#5a78b0" stroke-width="0.800"/>
</svg><span style="left:32px">Copy</span></div>
<div class="mi" style="top:97px;width:364px"><svg class="abs" style="left:4.500px;top:4px" width="14" height="15" viewBox="0 0 16 16">
<rect x="1.500" y="2.500" width="11" height="12.500" rx="1" fill="#eecf8e" stroke="#b08a44"/>
<rect x="4.500" y="0.800" width="5" height="3" rx="0.800" fill="#c8c8c8" stroke="#8a8a8a" stroke-width="0.800"/>
<path d="M6.500 6.500h6l2 2v7h-8z" fill="#fff" stroke="#7a86a0" stroke-width="0.900"/><path d="M8 10.500h4M8 12.500h5" stroke="#5a78b0" stroke-width="0.800"/>
</svg><span style="left:32px">Paste</span></div>
<div class="mi" style="top:119px;width:364px"><svg class="abs" style="left:5px;top:4.500px" width="13" height="13" viewBox="0 0 14 14">
<path d="M2 2l10 10M12 2l-10 10" stroke="#d83434" stroke-width="4.400" stroke-linecap="round"/>
<path d="M2 2l10 10M12 2l-10 10" stroke="#ee6258" stroke-width="2.400" stroke-linecap="round"/>
</svg><span style="left:32px">Delete</span></div>
<div class="mi" style="top:141px;width:364px"><span style="left:32px">Move...</span></div>
<div class="mi" style="top:163px;width:364px"><span style="left:32px">Rename...</span></div>
<div class="ms" style="left:30px;top:188px;width:336px"></div>
<div class="mi" style="top:192px;width:364px"><svg class="abs" style="left:2.800px;top:4px" width="16.200" height="15" viewBox="0 0 17 16">
<path d="M1 8v6.500h14v-6.500h-3v3.500h-8v-3.500z" fill="#c4d6f0" stroke="#5a7ec0" stroke-width="0.900"/>
<path d="M3 1.500l8 7" stroke="#5a7ec0" stroke-width="1.100"/><path d="M12 10l-1-4.200-3.200 3.400z" fill="#23407e"/>
</svg><span style="left:32px">Import...</span></div>
<div class="mi" style="top:214px;width:364px"><svg class="abs" style="left:2.800px;top:4px" width="16.200" height="15" viewBox="0 0 17 16">
<path d="M1 8v6.500h14v-6.500h-3v3.500h-8v-3.500z" fill="#c4d6f0" stroke="#5a7ec0" stroke-width="0.900"/>
<path d="M3.500 2.500l8 8" stroke="#5a7ec0" stroke-width="1.100"/><path d="M2 0.800l1 4.200 3.200-3.400z" fill="#23407e"/>
</svg><span style="left:32px">Export...</span></div>
<div class="ms" style="left:30px;top:239px;width:336px"></div>
<div class="mi" style="top:243px;width:364px"><svg class="abs" style="left:2.800px;top:3px" width="16" height="15" viewBox="0 0 17 16">
<path d="M5.500 2.500h6l3 3v9.500h-9z" fill="#eef2fa" stroke="#b8a070" stroke-width="0.900"/>
<path d="M2 6.500a3 3 0 0 1 5.500-1M8 9.500a3 3 0 0 1-5.500 1" fill="none" stroke="#e8aa28" stroke-width="1.900"/>
<path d="M8.500 3.500v3h-3zM1.500 12.500v-3h3z" fill="#e0a020"/>
</svg><span style="left:32px">Refresh</span></div>
<div class="ms" style="left:30px;top:268px;width:336px"></div>
<div class="mi" style="top:272px;width:364px"><span style="left:32px">Validate</span></div>
<div class="mi" style="top:294px;width:364px"><span style="left:32px">Show in Remote Systems view</span></div>
<div class="mi" style="top:316px;width:364px"><span style="left:32px">Run As</span><i class="arr" style="left:348.500px;top:8px"></i></div>
<div class="mi" style="top:338px;width:364px"><span style="left:32px">Debug As</span><i class="arr" style="left:348.500px;top:8px"></i></div>
<div class="mi" style="top:360px;width:364px"><span style="left:32px">Profile As</span><i class="arr" style="left:348.500px;top:8px"></i></div>
<div class="mi" style="top:382px;width:364px"><span style="left:32px">Restore from Local History...</span></div>
<div class="mi" style="top:404px;width:364px"><span style="left:32px">Team</span><i class="arr" style="left:348.500px;top:8px"></i></div>
</div>
<div class="menu" style="left:428px;top:187px;width:238px;height:181px">
<div class="mi" style="top:2px;width:232px"><svg class="abs" style="left:4px;top:3.500px" width="16" height="15" viewBox="0 0 17 16">
<rect x="0.500" y="3.500" width="13" height="11" fill="url(#gw)" stroke="#8d7750"/>
<rect x="1" y="4" width="12" height="2" fill="#3f7fdc"/>
<path d="M13 0l1.300 2.700 2.700 1.300-2.700 1.300-1.300 2.700-1.300-2.700-2.700-1.300 2.700-1.300z" fill="#fff6cc" stroke="#d69a2c" stroke-width="0.900" transform="translate(-1,0)"/>
</svg><span style="left:32px">Project...</span></div>
<div class="ms" style="left:30px;top:27px;width:204px"></div>
<div class="mi" style="top:31px;width:232px"><svg class="abs" style="left:4px;top:3px" width="12.500" height="16" viewBox="0 0 14 17">
<path d="M0.500 0.500h8.500l4 4v11.500h-12.500z" fill="#fff" stroke="#9a9aa6"/><path d="M9 0.500v4h4" fill="#f0f0f4" stroke="#9a9aa6" stroke-width="0.800"/>
<circle cx="5" cy="11.500" r="2.800" fill="#e8542e"/><path d="M4 11l3.500-4.500 3.500 4.500z" fill="#4a8ae0"/>
</svg><span style="left:32px">New eXbuilder6 File</span></div>
<div class="mi" style="top:53px;width:232px"><svg class="abs" style="left:4px;top:4px" width="16" height="15" viewBox="0 0 17 16">
<path d="M1 14.500v-8.500l1-1h4l1 1h5v2" fill="#f0dca0" stroke="#6a7aa0"/>
<path d="M1 14.500l3-6h12.500l-3 6z" fill="#6aa0e8" stroke="#3058a8"/>
<path d="M12 0.500v2h-2v1.600h2v2h1.600v-2h2v-1.600h-2v-2z" fill="#fff3b8" stroke="#d69a2c" stroke-width="0.800"/>
</svg><span style="left:32px">New eXbuilder6 Project</span></div>
<div class="mi" style="top:75px;width:232px"><svg class="abs" style="left:4px;top:4px" width="16" height="15" viewBox="0 0 17 16">
<path d="M1 14.500v-8.500l1-1h4l1 1h5v2" fill="#f0dca0" stroke="#8a7a50"/>
<path d="M1 14.500l3-6h12.500l-3 6z" fill="#c8dcf4" stroke="#5a78b0"/>
<path d="M12 0.500v2h-2v1.600h2v2h1.600v-2h2v-1.600h-2v-2z" fill="#fff3b8" stroke="#d69a2c" stroke-width="0.800"/>
</svg><span style="left:32px">eXbuilder Examples</span></div>
<div class="mi hl" style="top:97px;width:232px"><svg class="abs" style="left:4px;top:4px" width="16" height="13" viewBox="0 0 16 13">
<rect x="0.500" y="3.500" width="10.500" height="3" fill="#3d9a4f" stroke="#1f6a2c" stroke-width="0.800"/>
<rect x="0.500" y="6.500" width="10.500" height="3" fill="#3b6c9e" stroke="#244a7a" stroke-width="0.800"/>
<rect x="0.500" y="9.500" width="10.500" height="3" fill="#d08a3c" stroke="#9a5a18" stroke-width="0.800"/>
<path d="M2 5h7M2 8h7" stroke="#d8e8d0" stroke-width="0.700"/>
<path d="M10.500 12.500l2.500-12 2.500 12z" fill="#f8bc44" stroke="#c07a14" stroke-width="0.800"/>
</svg><span style="left:32px">New Common Module</span></div>
<div class="ms" style="left:30px;top:123px;width:204px"></div>
<div class="mi" style="top:126px;width:232px"><svg class="abs" style="left:4px;top:3.500px" width="16" height="15" viewBox="0 0 17 16">
<rect x="0.500" y="3.500" width="13" height="11" fill="url(#gw)" stroke="#8d7750"/>
<rect x="1" y="4" width="12" height="2" fill="#3f7fdc"/>
<path d="M13 0l1.300 2.700 2.700 1.300-2.700 1.300-1.300 2.700-1.300-2.700-2.700-1.300 2.700-1.300z" fill="#fff6cc" stroke="#d69a2c" stroke-width="0.900" transform="translate(-1,0)"/>
</svg><span style="left:32px">Example...</span></div>
<div class="ms" style="left:30px;top:151px;width:204px"></div>
<div class="mi" style="top:155px;width:232px"><svg class="abs" style="left:4px;top:3.500px" width="16" height="15" viewBox="0 0 17 16">
<rect x="0.500" y="3.500" width="13" height="11" fill="url(#gw)" stroke="#8d7750"/>
<rect x="1" y="4" width="12" height="2" fill="#3f7fdc"/>
<path d="M13 0l1.300 2.700 2.700 1.300-2.700 1.300-1.300 2.700-1.300-2.700-2.700-1.300 2.700-1.300z" fill="#fff6cc" stroke="#d69a2c" stroke-width="0.900" transform="translate(-1,0)"/>
</svg><span style="left:32px">Other...</span><span style="left:178px">Ctrl+N</span></div>
</div>
<svg class="abs" style="left:519px;top:297px" width="14" height="21" viewBox="0 0 14 21"><path d="M1 1v16l3.800-3.600 2.600 6 2.400-1-2.600-5.900h5.300z" fill="#fff" stroke="#000" stroke-width="1"/></svg>
</body>
</html>
